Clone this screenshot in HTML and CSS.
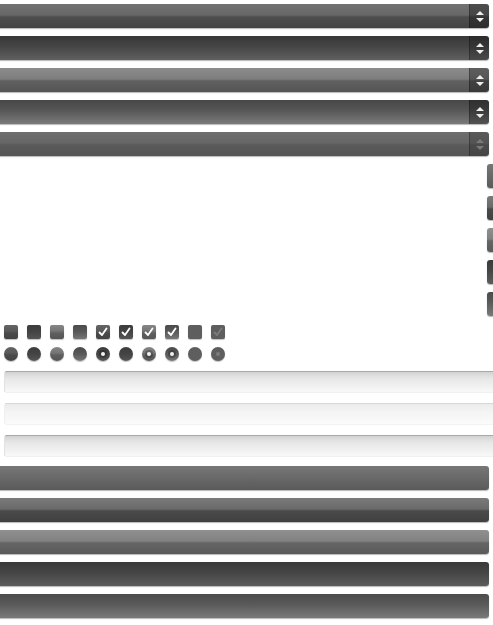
FILE: index.html
```html
<!DOCTYPE html>
<html>
<head>
<meta charset="utf-8">
<link rel="stylesheet" href="styles.css">
</head>
<body>
<div class="page">
  <div class="selects">
    <div class="select s1"><span class="arrows"><i class="up"></i><i class="down"></i></span></div>
    <div class="select s2"><span class="arrows"><i class="up"></i><i class="down"></i></span></div>
    <div class="select s3"><span class="arrows"><i class="up"></i><i class="down"></i></span></div>
    <div class="select s4"><span class="arrows"><i class="up"></i><i class="down"></i></span></div>
    <div class="select s5 disabled"><span class="arrows"><i class="up"></i><i class="down"></i></span></div>
  </div>

  <div class="minis">
    <div class="mini b1"></div>
    <div class="mini b2"></div>
    <div class="mini b3"></div>
    <div class="mini b4"></div>
    <div class="mini b5"></div>
  </div>

  <div class="row checks">
    <span class="box c1"></span>
    <span class="box c2"></span>
    <span class="box c3"></span>
    <span class="box c4"></span>
    <span class="box c1 on"><svg viewBox="0 0 14 14"><polyline points="3.5,7.5 6,10 10.5,3.5"/></svg></span>
    <span class="box c2 on"><svg viewBox="0 0 14 14"><polyline points="3.5,7.5 6,10 10.5,3.5"/></svg></span>
    <span class="box c3 on"><svg viewBox="0 0 14 14"><polyline points="3.5,7.5 6,10 10.5,3.5"/></svg></span>
    <span class="box c4 on"><svg viewBox="0 0 14 14"><polyline points="3.5,7.5 6,10 10.5,3.5"/></svg></span>
    <span class="box c5"></span>
    <span class="box c5 on dis"><svg viewBox="0 0 14 14"><polyline points="3.5,7.5 6,10 10.5,3.5"/></svg></span>
  </div>

  <div class="row radios">
    <span class="radio c1"></span>
    <span class="radio c2"></span>
    <span class="radio c3"></span>
    <span class="radio c4"></span>
    <span class="radio c2 dot"></span>
    <span class="radio c2"></span>
    <span class="radio c3 dot"></span>
    <span class="radio c4 dot"></span>
    <span class="radio c5"></span>
    <span class="radio c5 dot dis"></span>
  </div>

  <div class="inputs">
    <div class="input i1"></div>
    <div class="input i2"></div>
    <div class="input i1"></div>
  </div>

  <div class="buttons">
    <div class="button b1"></div>
    <div class="button b2"></div>
    <div class="button b3"></div>
    <div class="button b4"></div>
    <div class="button b5"></div>
  </div>
</div>
</body>
</html>
```

FILE: styles.css
```css
html, body {
  margin: 0;
  padding: 0;
  background: #fff;
  overflow: hidden;
  font-family: "Liberation Sans", Arial, sans-serif;
}
.page {
  width: 493px;
  height: 625px;
  overflow: hidden;
  display: flex;
  flex-direction: column;
}

/* selects */
.selects {
  display: flex;
  flex-direction: column;
  gap: 8px;
  padding-top: 4px;
}
.select {
  height: 24px;
  width: 499px;
  margin-left: -10px;
  border-radius: 3px;
  box-shadow: 0 1px 1px rgba(0,0,0,0.28);
  display: flex;
  justify-content: flex-end;
  box-sizing: border-box;
}
.s1 { background: linear-gradient(#727272 0%, #676767 46%, #4e4e4e 54%, #444 100%); }
.s2 { background: linear-gradient(#383838 0%, #444 40%, #5f5f5f 100%); }
.s3 { background: linear-gradient(#8c8c8c 0%, #7d7d7d 46%, #606060 54%, #555 100%); }
.s4 { background: linear-gradient(#474747 0%, #555 40%, #7a7a7a 100%); }
.s5 { background: linear-gradient(#6e6e6e 0%, #666 46%, #5a5a5a 54%, #555 100%); }

.arrows {
  width: 19px;
  height: 24px;
  background: rgba(0,0,0,0.32);
  border-left: 1px solid rgba(0,0,0,0.25);
  border-radius: 0 3px 3px 0;
  display: flex;
  flex-direction: column;
  align-items: center;
  justify-content: center;
  gap: 3px;
}
.s2 .arrows { background: rgba(0,0,0,0.22); }
.arrows i {
  display: block;
  width: 0;
  height: 0;
  border-left: 4px solid transparent;
  border-right: 4px solid transparent;
}
.arrows .up { border-bottom: 4px solid #eee; }
.arrows .down { border-top: 4px solid #eee; }
.disabled .arrows { background: rgba(0,0,0,0.18); }
.disabled .arrows .up { border-bottom-color: #7a7a7a; }
.disabled .arrows .down { border-top-color: #7a7a7a; }

/* mini buttons on right edge */
.minis {
  display: flex;
  flex-direction: column;
  gap: 8px;
  margin-top: 8px;
  padding-left: 487px;
}
.mini {
  width: 20px;
  height: 24px;
  border-radius: 3px;
  box-shadow: 0 1px 1px rgba(0,0,0,0.28);
}

.b1 { background: linear-gradient(#777 0%, #5a5a5a 100%); }
.b2 { background: linear-gradient(#7a7a7a 0%, #6a6a6a 46%, #4a4a4a 54%, #404040 100%); }
.b3 { background: linear-gradient(#909090 0%, #818181 46%, #656565 54%, #5a5a5a 100%); }
.b4 { background: linear-gradient(#3a3a3a 0%, #444 40%, #5c5c5c 100%); }
.b5 { background: linear-gradient(#4c4c4c 0%, #585858 40%, #7a7a7a 100%); }

/* checkboxes & radios */
.row {
  display: flex;
  gap: 9px;
  padding-left: 4px;
}
.checks { margin-top: 9px; }
.radios { margin-top: 8px; }
.box, .radio {
  width: 14px;
  height: 14px;
  display: flex;
  align-items: center;
  justify-content: center;
  box-shadow: 0 1px 1px rgba(0,0,0,0.25);
}
.box { border-radius: 2px; }
.radio { border-radius: 50%; }
.c1 { background: linear-gradient(#646464 0%, #5a5a5a 40%, #4a4a4a 60%, #444 100%); }
.c2 { background: linear-gradient(#3c3c3c 0%, #444 50%, #555 100%); }
.c3 { background: linear-gradient(#868686 0%, #767676 40%, #5e5e5e 60%, #555 100%); }
.c4 { background: linear-gradient(#4a4a4a 0%, #5a5a5a 50%, #777 100%); }
.c5 { background: #5e5e5e; }
.box svg { width: 14px; height: 14px; }
.box svg polyline {
  fill: none;
  stroke: #fff;
  stroke-width: 1.8;
  stroke-linecap: round;
  stroke-linejoin: round;
}
.box.dis svg polyline { stroke: #7c7c7c; }
.radio.dot::after {
  content: "";
  width: 4px;
  height: 4px;
  border-radius: 50%;
  background: #f2f2f2;
  box-shadow: 0 0 0 2px rgba(0,0,0,0.22);
}
.radio.dis::after { background: #7c7c7c; box-shadow: none; }

/* text inputs */
.inputs {
  display: flex;
  flex-direction: column;
  gap: 10px;
  margin-top: 10px;
  padding-left: 4px;
}
.input {
  height: 22px;
  width: 500px;
  box-sizing: border-box;
  border-radius: 3px;
}
.i1 {
  background: linear-gradient(#d2d2d2 0%, #e6e6e6 30%, #f8f8f8 100%);
  border-top: 1px solid #a8a8a8;
  border-left: 1px solid #e2e2e2;
  border-bottom: 1px solid #f0f0f0;
}
.i2 {
  background: linear-gradient(#ececec 0%, #f4f4f4 40%, #fbfbfb 100%);
  border-top: 1px solid #d8d8d8;
  border-left: 1px solid #efefef;
  border-bottom: 1px solid #f3f3f3;
}

/* bottom buttons */
.buttons {
  display: flex;
  flex-direction: column;
  gap: 8px;
  margin-top: 9px;
}
.button {
  height: 24px;
  width: 499px;
  margin-left: -10px;
  border-radius: 3px;
  box-shadow: 0 1px 1px rgba(0,0,0,0.28);
}
```
